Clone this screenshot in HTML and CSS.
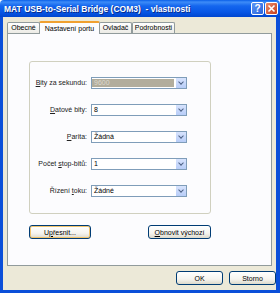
FILE: index.html
```html
<!DOCTYPE html>
<html>
	<head>
		<meta charset="UTF-8">
		<title>MAT USB-to-Serial Bridge (COM3) - vlastnosti</title>
		<link rel="stylesheet" href="styles.css">
	</head>
	<body>
		<div class="window">
			<div class="titlebar">
				<span class="title">MAT USB-to-Serial Bridge (COM3) &nbsp;- vlastnosti</span>
				<span class="tbtn help">?</span>
				<span class="tbtn close">
					<svg width="9" height="9" viewBox="0 0 9 9"><path d="M1.5 1.5 L7.5 7.5 M7.5 1.5 L1.5 7.5" stroke="#fff" stroke-width="1.6"/></svg>
				</span>
			</div>
			<div class="frame">
				<ul class="tabs">
					<li>Obecné</li>
					<li class="selected">Nastavení portu</li>
					<li>Ovladač</li>
					<li>Podrobnosti</li>
				</ul>
				<div class="panel">
					<div class="group">
						<label><u>B</u>ity za sekundu:</label>
						<div class="combo disabled"><span class="val">9600</span><span class="arrow"></span></div>
						<label><u>D</u>atové bity:</label>
						<div class="combo"><span class="val">8</span><span class="arrow"></span></div>
						<label><u>P</u>arita:</label>
						<div class="combo"><span class="val">Žádná</span><span class="arrow"></span></div>
						<label>Počet <u>s</u>top-bitů:</label>
						<div class="combo"><span class="val">1</span><span class="arrow"></span></div>
						<label>Řízení <u>t</u>oku:</label>
						<div class="combo"><span class="val">Žádné</span><span class="arrow"></span></div>
					</div>
					<div class="panel-buttons">
						<button class="btn hot w-upr">U<u>p</u>řesnit...</button>
						<button class="btn w-obn"><u>O</u>bnovit výchozí</button>
					</div>
				</div>
				<div class="footer">
					<button class="btn w-dlg">OK</button>
					<button class="btn w-dlg">Storno</button>
				</div>
			</div>
		</div>
	</body>
</html>
```

FILE: styles.css
```css
*{padding: 0;margin: 0;box-sizing: border-box;}
li{list-style: none;}
body{font-family: "Liberation Sans", "DejaVu Sans", sans-serif;font-size: 7px;color: #000;background: #fff;white-space: nowrap;}

.window{width: 280px;height: 293px;display: flex;flex-direction: column;}

.titlebar{height: 17px;display: flex;align-items: center;padding: 0 2px 0 4px;
	background: linear-gradient(#0a5fe8 0%, #3d8cf8 12%, #1466ee 35%, #0857e6 70%, #0046cf 100%);
	border-radius: 4px 4px 0 0;}
.title{flex: 1;color: #fff;font-weight: bold;font-size: 8.5px;white-space: pre;text-shadow: 1px 1px 0 #0a2c8a;}
.tbtn{width: 13px;height: 13px;border: 1px solid #fff;border-radius: 2px;margin-left: 1px;
	display: flex;align-items: center;justify-content: center;color: #fff;font-weight: bold;font-size: 10px;}
.help{background: linear-gradient(135deg, #5d96f6, #2a63db);}
.close{background: linear-gradient(135deg, #e88a6c, #c8401c);}

.frame{flex: 1;display: flex;flex-direction: column;background: #ece9d8;
	border: solid #0b4fd9;border-width: 0 4px 3px 3px;}

.tabs{display: flex;align-items: flex-end;height: 16px;padding-left: 4px;position: relative;z-index: 1;}
.tabs>li{height: 11px;line-height: 10px;text-align: center;border: 1px solid #919b9c;border-bottom: none;
	border-radius: 2px 2px 0 0;background: linear-gradient(#fff, #ecebe5);margin-right: -1px;}
.tabs>li:nth-child(1){width: 33px;}
.tabs>li:nth-child(3){width: 33px;}
.tabs>li:nth-child(4){width: 43px;margin-left: 1px;}
.tabs>li.selected{width: 61px;height: 13px;line-height: 11px;background: #fcfcfe;border-top: 2px solid #f0a030;
	margin-bottom: -1px;position: relative;}

.panel{height: 233px;margin: 0 4px 0 4px;border: 1px solid #919b9c;background: #fcfcfe;
	padding: 27px 0 0 21px;}

.group{width: 182px;height: 153px;border: 1px solid #d0d0bf;border-radius: 3px;
	display: grid;grid-template-columns: 57px 96px;grid-auto-rows: 12px;column-gap: 4px;row-gap: 15px;
	padding-top: 15px;align-content: start;}
.group label{text-align: right;line-height: 12px;color: #222;}
.combo{display: flex;border: 1px solid #7f9db9;background: #fff;height: 12px;}
.combo .val{flex: 1;padding-left: 2px;line-height: 10px;}
.combo .arrow{width: 11px;background: linear-gradient(#d7e3fd, #b8cdf8);border-left: 1px solid #fff;position: relative;}
.combo .arrow:after{content: "";position: absolute;left: 3px;top: 2px;width: 3px;height: 3px;
	border: solid #4d6185;border-width: 0 1.5px 1.5px 0;transform: rotate(45deg);}
.combo.disabled .val{background: #b2ad9c;color: #dcd9cf;margin: 1px 1px 1px 0;line-height: 8px;}

.panel-buttons{display: flex;width: 182px;justify-content: space-between;margin-top: 11px;}

.btn{height: 14px;font-family: inherit;font-size: 7px;border: 1px solid #003c74;border-radius: 3px;
	background: linear-gradient(#fff 0%, #f5f4ef 60%, #dcd9cb 100%);color: #000;}
.btn.hot{box-shadow: inset 0 0 0 1px #f1c46d;}
.w-upr{width: 62px;}
.w-obn{width: 63px;}
.w-dlg{width: 47px;margin-left: 6px;}

.footer{display: flex;justify-content: flex-end;padding: 5px 0 0 0;}
```
